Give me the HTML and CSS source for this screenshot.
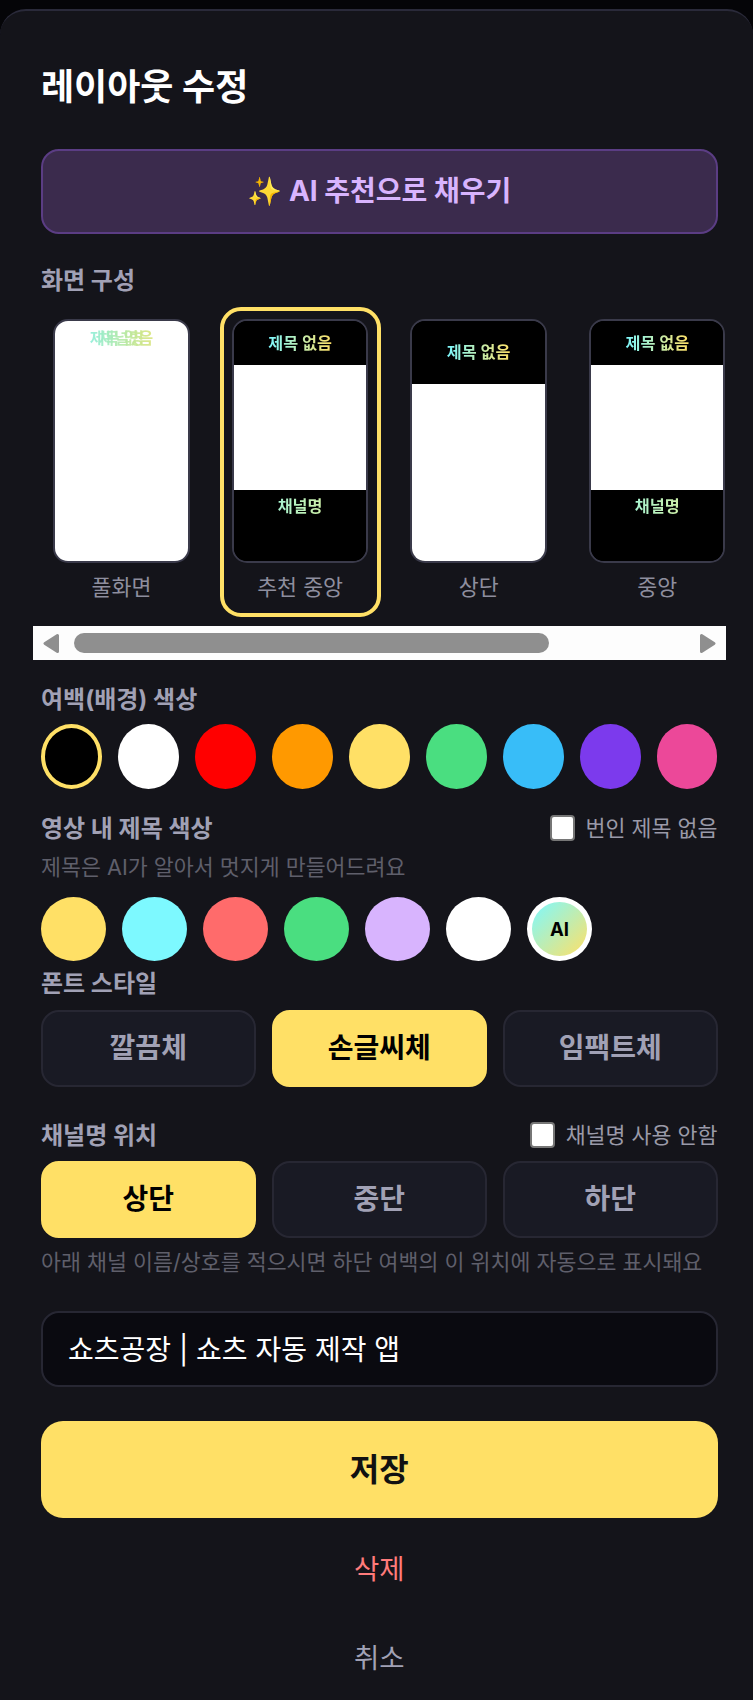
FILE: index.html
```html
<!DOCTYPE html>
<html lang="ko">
<head>
<meta charset="utf-8">
<title>레이아웃 수정</title>
<link rel="stylesheet" href="styles.css">
</head>
<body>
<main class="panel">
  <h1 class="title">레이아웃 수정</h1>
  <button class="ai-fill">✨ AI 추천으로 채우기</button>

  <h2 class="label label-compose">화면 구성</h2>
  <div class="scroller">
    <div class="layouts">
      <div class="layout">
        <div class="thumb thumb-full">
          <span class="grad overlay">제목 없음</span>
          <span class="grad overlay">채널명</span>
        </div>
        <div class="layout-name">풀화면</div>
      </div>
      <div class="layout selected">
        <div class="thumb">
          <div class="band band-short"><span class="grad">제목 없음</span></div>
          <div class="video video-mid"></div>
          <div class="band band-fill"><span class="grad grad-ch">채널명</span></div>
        </div>
        <div class="layout-name">추천 중앙</div>
      </div>
      <div class="layout">
        <div class="thumb">
          <div class="band band-tall"><span class="grad">제목 없음</span></div>
          <div class="video video-fill"></div>
        </div>
        <div class="layout-name">상단</div>
      </div>
      <div class="layout">
        <div class="thumb">
          <div class="band band-short"><span class="grad">제목 없음</span></div>
          <div class="video video-mid"></div>
          <div class="band band-fill"><span class="grad grad-ch">채널명</span></div>
        </div>
        <div class="layout-name">중앙</div>
      </div>
    </div>
    <div class="scrollbar">
      <svg class="arrow" viewBox="0 0 17 21"><path d="M14.5 2.5V18.5L2 10.5Z" fill="#8f8f8f" stroke="#8f8f8f" stroke-width="3" stroke-linejoin="round"/></svg>
      <div class="track"><div class="bar"></div></div>
      <svg class="arrow" viewBox="0 0 17 21"><path d="M2.5 2.5V18.5L15 10.5Z" fill="#8f8f8f" stroke="#8f8f8f" stroke-width="3" stroke-linejoin="round"/></svg>
    </div>
  </div>

  <h2 class="label label-bg">여백(배경) 색상</h2>
  <div class="swatches">
    <div class="swatch c-black on"></div>
    <div class="swatch c-white"></div>
    <div class="swatch c-red"></div>
    <div class="swatch c-orange"></div>
    <div class="swatch c-yellow"></div>
    <div class="swatch c-green"></div>
    <div class="swatch c-sky"></div>
    <div class="swatch c-violet"></div>
    <div class="swatch c-pink"></div>
  </div>

  <div class="row row-title">
    <h2 class="label">영상 내 제목 색상</h2>
    <label class="check"><input type="checkbox"><span>번인 제목 없음</span></label>
  </div>
  <p class="hint hint-title">제목은 AI가 알아서 멋지게 만들어드려요</p>
  <div class="dots">
    <div class="dot c-yellow"></div>
    <div class="dot c-cyan"></div>
    <div class="dot c-coral"></div>
    <div class="dot c-green"></div>
    <div class="dot c-lilac"></div>
    <div class="dot c-white"></div>
    <div class="dot dot-ai">AI</div>
  </div>

  <h2 class="label label-font">폰트 스타일</h2>
  <div class="choices choices-font">
    <button class="choice">깔끔체</button>
    <button class="choice active">손글씨체</button>
    <button class="choice">임팩트체</button>
  </div>

  <div class="row row-channel">
    <h2 class="label">채널명 위치</h2>
    <label class="check"><input type="checkbox"><span>채널명 사용 안함</span></label>
  </div>
  <div class="choices choices-pos">
    <button class="choice active">상단</button>
    <button class="choice">중단</button>
    <button class="choice">하단</button>
  </div>
  <p class="hint hint-channel">아래 채널 이름/상호를 적으시면 하단 여백의 이 위치에 자동으로 표시돼요</p>

  <input class="channel-input" type="text" value="쇼츠공장 | 쇼츠 자동 제작 앱">

  <button class="save">저장</button>
  <button class="text-btn delete">삭제</button>
  <button class="text-btn cancel">취소</button>
</main>
</body>
</html>
```
FILE: styles.css
```css
* { box-sizing: border-box; }
html, body { margin: 0; padding: 0; }
body {
  background: #050508;
  font-family: Inter, "Noto Sans CJK KR", sans-serif;
  padding-top: 9px;
}
button, input { font-family: inherit; }
.panel {
  background: #14141a;
  border-top: 2px solid #2a2a3a;
  border-radius: 26px 26px 0 0;
  padding: 54px 35.5px 0 41px;
  height: 1691px;
  overflow: hidden;
}
.title {
  margin: 0;
  font-size: 36px;
  line-height: 44px;
  font-weight: 700;
  color: #fff;
}
.ai-fill {
  display: block;
  width: 100%;
  height: 85px;
  margin-top: 40px;
  padding: 0 0 6px;
  background: #3b2b4d;
  border: 2px solid #5b3d84;
  border-radius: 18px;
  color: #d8b4fe;
  font-size: 28px;
  font-weight: 700;
}
.label {
  margin: 0;
  font-size: 24px;
  line-height: 30px;
  font-weight: 700;
  color: #a1a1b5;
  position: relative;
  top: 1px;
}
.label-compose { margin-top: 31px; }
.scroller {
  width: 693px;
  margin: 12px 0 0 -8px;
  overflow: hidden;
}
.layouts {
  display: flex;
  gap: 17.6px;
  padding-left: 8px;
}
.layout {
  flex: none;
  width: 161px;
  height: 310px;
  padding: 8px 8.3px 0;
  border: 4px solid transparent;
  border-radius: 21px;
}
.layout.selected { border-color: #ffe066; }
.thumb {
  position: relative;
  height: 244px;
  border: 2px solid #3a3a4a;
  border-radius: 15px;
  background: #000;
  overflow: hidden;
  display: flex;
  flex-direction: column;
}
.thumb-full { background: #fff; }
.layout-name {
  margin-top: 9px;
  font-size: 21.7px;
  line-height: 30px;
  text-align: center;
  color: #8e8e9e;
}
.grad {
  font-size: 16.25px;
  line-height: 20px;
  font-weight: 700;
  background: linear-gradient(90deg, #7df9ff, #ffe066);
  -webkit-background-clip: text;
  background-clip: text;
  color: transparent;
}
.grad-ch { background-image: linear-gradient(90deg, #a8f3d0, #cdf0a8); }
.overlay {
  position: absolute;
  left: 0;
  right: 0;
  top: 7px;
  width: 64px;
  margin: 0 auto;
  text-align: center;
  white-space: nowrap;
  background-image: linear-gradient(90deg, #8eeed8, #dbe47a);
  opacity: 0.9;
}
.band {
  background: #000;
  display: flex;
  justify-content: center;
  align-items: flex-start;
}
.band-short { height: 44px; padding-top: 12px; flex: none; }
.band-tall { height: 63px; padding-top: 21px; flex: none; }
.band-fill { flex: 1; padding-top: 6px; }
.video { background: #fff; }
.video-mid { height: 125px; flex: none; }
.video-fill { flex: 1; }
.scrollbar {
  height: 34px;
  margin-top: 9px;
  background: #fdfdfd;
  display: flex;
  align-items: center;
  padding: 0 10px;
}
.arrow { flex: none; width: 17px; height: 21px; display: block; }
.track { flex: 1; padding: 0 14px; }
.bar {
  width: 475px;
  height: 20px;
  background: #8f8f8f;
  border-radius: 10px;
}
.label-bg { margin-top: 24px; }
.swatches {
  display: grid;
  grid-template-columns: repeat(9, 1fr);
  gap: 16px;
  margin-top: 10px;
}
.swatch {
  height: 65px;
  border-radius: 50%;
}
.swatch.on { border: 4px solid #ffe066; }
.c-black { background: #000; }
.c-white { background: #fff; }
.c-red { background: #f00; }
.c-orange { background: #f90; }
.c-yellow { background: #ffe066; }
.c-green { background: #4ade80; }
.c-sky { background: #38bdf8; }
.c-violet { background: #7c3aed; }
.c-pink { background: #ec4899; }
.c-cyan { background: #7df9ff; }
.c-coral { background: #ff6b6b; }
.c-lilac { background: #d8b4fe; }
.row {
  display: flex;
  justify-content: space-between;
  align-items: center;
  height: 30px;
}
.row-title { margin-top: 24px; }
.row-channel { margin-top: 33px; }
.check {
  display: flex;
  align-items: center;
  gap: 11px;
  font-size: 21.7px;
  line-height: 30px;
  color: #9a9aa8;
}
.check input {
  appearance: none;
  -webkit-appearance: none;
  width: 25px;
  height: 26px;
  margin: 0;
  flex: none;
  background: #fff;
  border: 2px solid #767676;
  border-radius: 4px;
}
.hint {
  margin: 9px 0 0;
  font-size: 21.7px;
  line-height: 30px;
  color: #5f5f6b;
  white-space: nowrap;
}
.dots {
  display: flex;
  gap: 16px;
  margin-top: 15px;
}
.dot {
  flex: none;
  width: 65px;
  height: 64px;
  border-radius: 50%;
}
.dot-ai {
  border: 5px solid #fff;
  background: linear-gradient(135deg, #7df9ff, #ffe066);
  color: #000;
  font-size: 18.5px;
  font-weight: 700;
  display: flex;
  align-items: center;
  justify-content: center;
}
.label-font { margin-top: 7px; }
.choices {
  display: flex;
  gap: 16.5px;
}
.choices-font { margin-top: 12px; }
.choices-pos { margin-top: 11px; }
.choice {
  flex: 1;
  height: 77px;
  background: #191a24;
  border: 2px solid #272733;
  border-radius: 18px;
  color: #a1a1b5;
  font-size: 28px;
  font-weight: 700;
  padding: 0 0 5px;
}
.choice.active {
  background: #ffe066;
  border-color: #ffe066;
  color: #000;
}
.channel-input {
  display: block;
  width: 100%;
  height: 76px;
  margin-top: 34px;
  padding: 0 25px 2px;
  background: #0a0a10;
  border: 2px solid #272733;
  border-radius: 18px;
  color: #fff;
  font-size: 28px;
  outline: none;
}
.save {
  display: block;
  width: 100%;
  height: 97px;
  margin-top: 34px;
  padding: 0 0 6px;
  background: #ffe066;
  border: 0;
  border-radius: 22px;
  color: #111;
  font-size: 32px;
  font-weight: 700;
}
.text-btn {
  display: block;
  width: 100%;
  height: 60px;
  padding: 0 0 4px;
  background: none;
  border: 0;
  font-size: 27.5px;
}
.delete { margin-top: 21px; color: #ff7b7b; }
.cancel { margin-top: 29px; color: #a1a1b5; }
```
